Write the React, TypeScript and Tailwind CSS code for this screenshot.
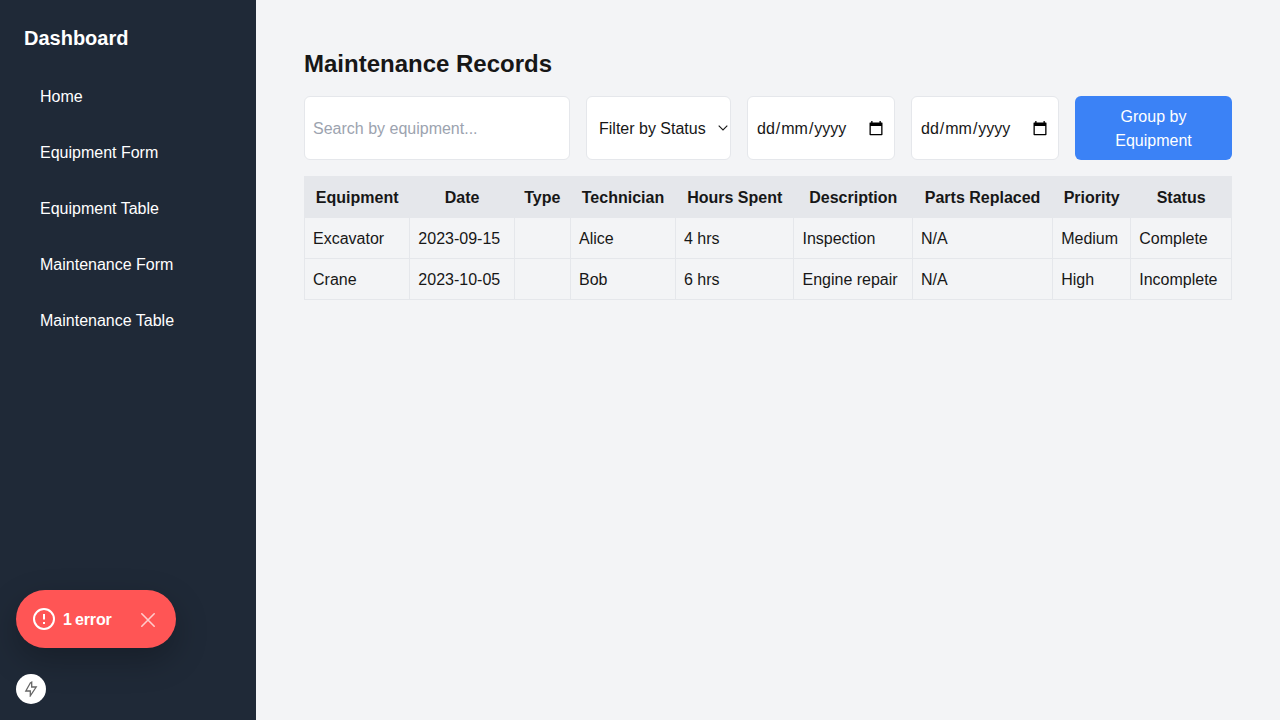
import React from "react";

const nav = ["Home", "Equipment Form", "Equipment Table", "Maintenance Form", "Maintenance Table"];

const headers = ["Equipment", "Date", "Type", "Technician", "Hours Spent", "Description", "Parts Replaced", "Priority", "Status"];

const rows = [
  ["Excavator", "2023-09-15", "", "Alice", "4 hrs", "Inspection", "N/A", "Medium", "Complete"],
  ["Crane", "2023-10-05", "", "Bob", "6 hrs", "Engine repair", "N/A", "High", "Incomplete"],
];

function Sidebar() {
  return (
    <aside className="w-64 shrink-0 bg-[#1f2937] text-white">
      <h1 className="p-6 text-xl font-bold">Dashboard</h1>
      <nav className="px-6">
        <ul className="space-y-4">
          {nav.map((item) => (
            <li key={item}>
              <a href="#" className="block rounded px-4 pt-[9px] pb-[7px]">{item}</a>
            </li>
          ))}
        </ul>
      </nav>
    </aside>
  );
}

function DateField() {
  return (
    <div className="flex w-[148px] shrink-0 items-center justify-between rounded-md border border-[#e5e7eb] bg-white pl-[9px] pr-[11px]">
      <span className="flex gap-px pt-0.5">
        <span>dd</span>
        <span>/</span>
        <span>mm</span>
        <span>/</span>
        <span>yyyy</span>
      </span>
      <svg width="14" height="15" viewBox="0 0 14 15" fill="none">
        <path fill="#000" fillRule="evenodd" d="M2.2 0h1.3v1.5h7V0h1.3v1.5H13q.5 0 .5.5v11.5q0 .8-.8.8H1.3q-.8 0-.8-.8V2q0-.5.5-.5h1.2zM1.8 5v8h10.4V5z" />
      </svg>
    </div>
  );
}

export default function App() {
  return (
    <div className="flex h-screen overflow-hidden bg-[#f3f4f6] font-['Liberation_Sans',Arial,sans-serif] text-base text-[#171717]">
      <Sidebar />
      <main className="flex-1 p-12">
        <h2 className="mb-4 text-2xl font-bold">Maintenance Records</h2>
        <div className="mb-4 flex h-16 gap-4">
          <input
            placeholder="Search by equipment..."
            className="w-[266px] rounded-md border border-[#e5e7eb] bg-white px-2 pt-[10px] pb-2 placeholder:text-[#9ca3af]"
          />
          <div className="relative flex w-[145px]">
            <select className="w-full appearance-none rounded-md border border-[#e5e7eb] bg-white pt-[10px] pb-2 pl-3 pr-0">
              <option>Filter by Status</option>
            </select>
            <svg className="pointer-events-none absolute right-[3.5px] top-[29px]" width="10" height="6" viewBox="0 0 10 6" fill="none" stroke="#171717" strokeWidth="1.1">
              <path d="M.7.7L5 5L9.3.7" />
            </svg>
          </div>
          <DateField />
          <DateField />
          <button className="flex-1 rounded-md bg-[#3b82f6] px-4 pt-[9px] pb-[7px] text-white">Group by Equipment</button>
        </div>
        <table className="w-full border-collapse border border-[#e5e7eb]">
          <thead>
            <tr className="bg-[#e5e7eb]">
              {headers.map((h) => (
                <th key={h} className="border border-[#e5e7eb] px-2 pt-[9px] pb-[7px] font-bold">{h}</th>
              ))}
            </tr>
          </thead>
          <tbody>
            {rows.map((r) => (
              <tr key={r[0]}>
                {r.map((c, i) => (
                  <td key={i} className="border border-[#e5e7eb] px-2 pt-[9px] pb-[7px]">{c}</td>
                ))}
              </tr>
            ))}
          </tbody>
        </table>
      </main>
      <div className="absolute left-4 top-[590px] flex h-[58px] w-40 items-center rounded-full bg-[#ff5555] pl-4 text-white shadow-[0_12px_32px_rgba(0,0,0,0.25)]">
        <svg width="24" height="24" viewBox="0 0 24 24" fill="none" stroke="currentColor" strokeWidth="2" strokeLinecap="round" strokeLinejoin="round">
          <circle cx="12" cy="12" r="10" />
          <path strokeLinecap="butt" d="M12 7v5.5M12 15v2" />
        </svg>
        <span className="ml-[7px] pt-0.5 font-bold tracking-[-0.15px] [word-spacing:-1px]">1 error</span>
        <svg className="absolute left-[120px] top-[18px] opacity-70" width="24" height="24" viewBox="0 0 24 24" fill="none" stroke="currentColor" strokeWidth="1.6" strokeLinecap="round">
          <path d="M18.2 5.8L5.8 18.2M5.8 5.8l12.4 12.4" />
        </svg>
      </div>
      <div className="absolute left-4 top-[674px] flex size-[30px] items-center justify-center rounded-full bg-white text-[#666]">
        <svg width="16" height="16" viewBox="0 0 16 16" fill="none" stroke="currentColor" strokeWidth="1.3">
          <path d="M7.3 2L2.8 10h4.5V14.8L13.2 6H8.7V1.2z" />
        </svg>
      </div>
    </div>
  );
}
